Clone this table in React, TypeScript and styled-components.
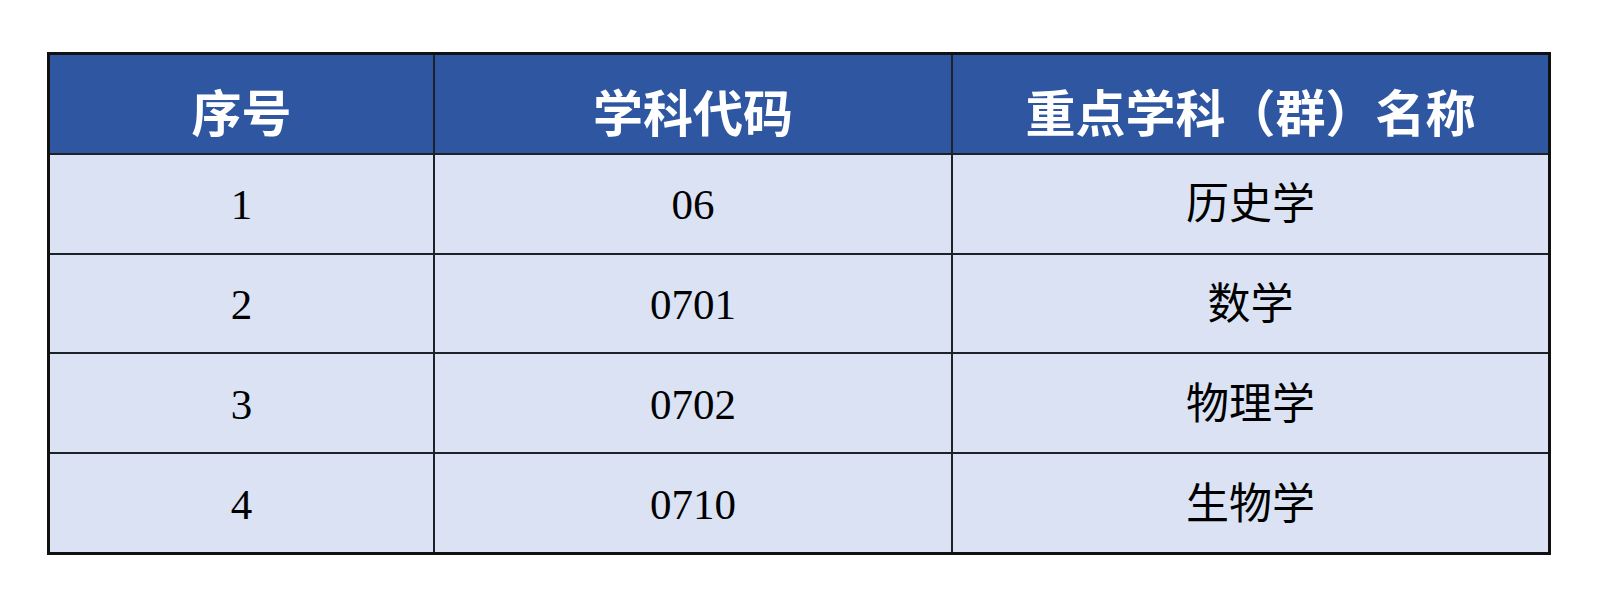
import React from "react";
import styled, { createGlobalStyle } from "styled-components";

const GlobalStyle = createGlobalStyle`
  html, body {
    margin: 0;
    padding: 0;
    background: #ffffff;
  }
  body {
    font-family: "Noto Sans CJK SC", "Noto Sans", sans-serif;
  }
`;

const Page = styled.div`
  width: 1600px;
  height: 608px;
  box-sizing: border-box;
  padding: 52px 0 0 47px;
  background: #ffffff;
`;

const Table = styled.div`
  width: 1504px;
  height: 503px;
  box-sizing: border-box;
  border: 3px solid #111111;
  background: #1f2128;
  display: grid;
  grid-template-columns: 383px 516px 595px;
  grid-template-rows: repeat(5, 1fr);
  gap: 2px;
`;

const HeadCell = styled.div`
  background: #2e56a1;
  color: #ffffff;
  display: flex;
  align-items: center;
  justify-content: center;
  font-family: "Noto Sans CJK SC", "Noto Sans", sans-serif;
  font-weight: 700;
  font-size: 50px;
  line-height: 1;
  padding-top: 12px;
  box-sizing: border-box;
`;

const BodyCell = styled.div`
  background: #dbe2f3;
  color: #000000;
  display: flex;
  align-items: center;
  justify-content: center;
  font-family: "Liberation Serif", "Noto Sans CJK SC", serif;
  font-weight: 400;
  font-size: 43px;
  line-height: 1;
  padding-top: 2px;
  box-sizing: border-box;
`;

const headers = ["序号", "学科代码", "重点学科（群）名称"];

const rows: [string, string, string][] = [
  ["1", "06", "历史学"],
  ["2", "0701", "数学"],
  ["3", "0702", "物理学"],
  ["4", "0710", "生物学"],
];

export default function App() {
  return (
    <>
      <GlobalStyle />
      <Page>
        <Table>
          {headers.map((h) => (
            <HeadCell key={h}>{h}</HeadCell>
          ))}
          {rows.map((r) =>
            r.map((c, i) => <BodyCell key={r[0] + "-" + i}>{c}</BodyCell>)
          )}
        </Table>
      </Page>
    </>
  );
}
